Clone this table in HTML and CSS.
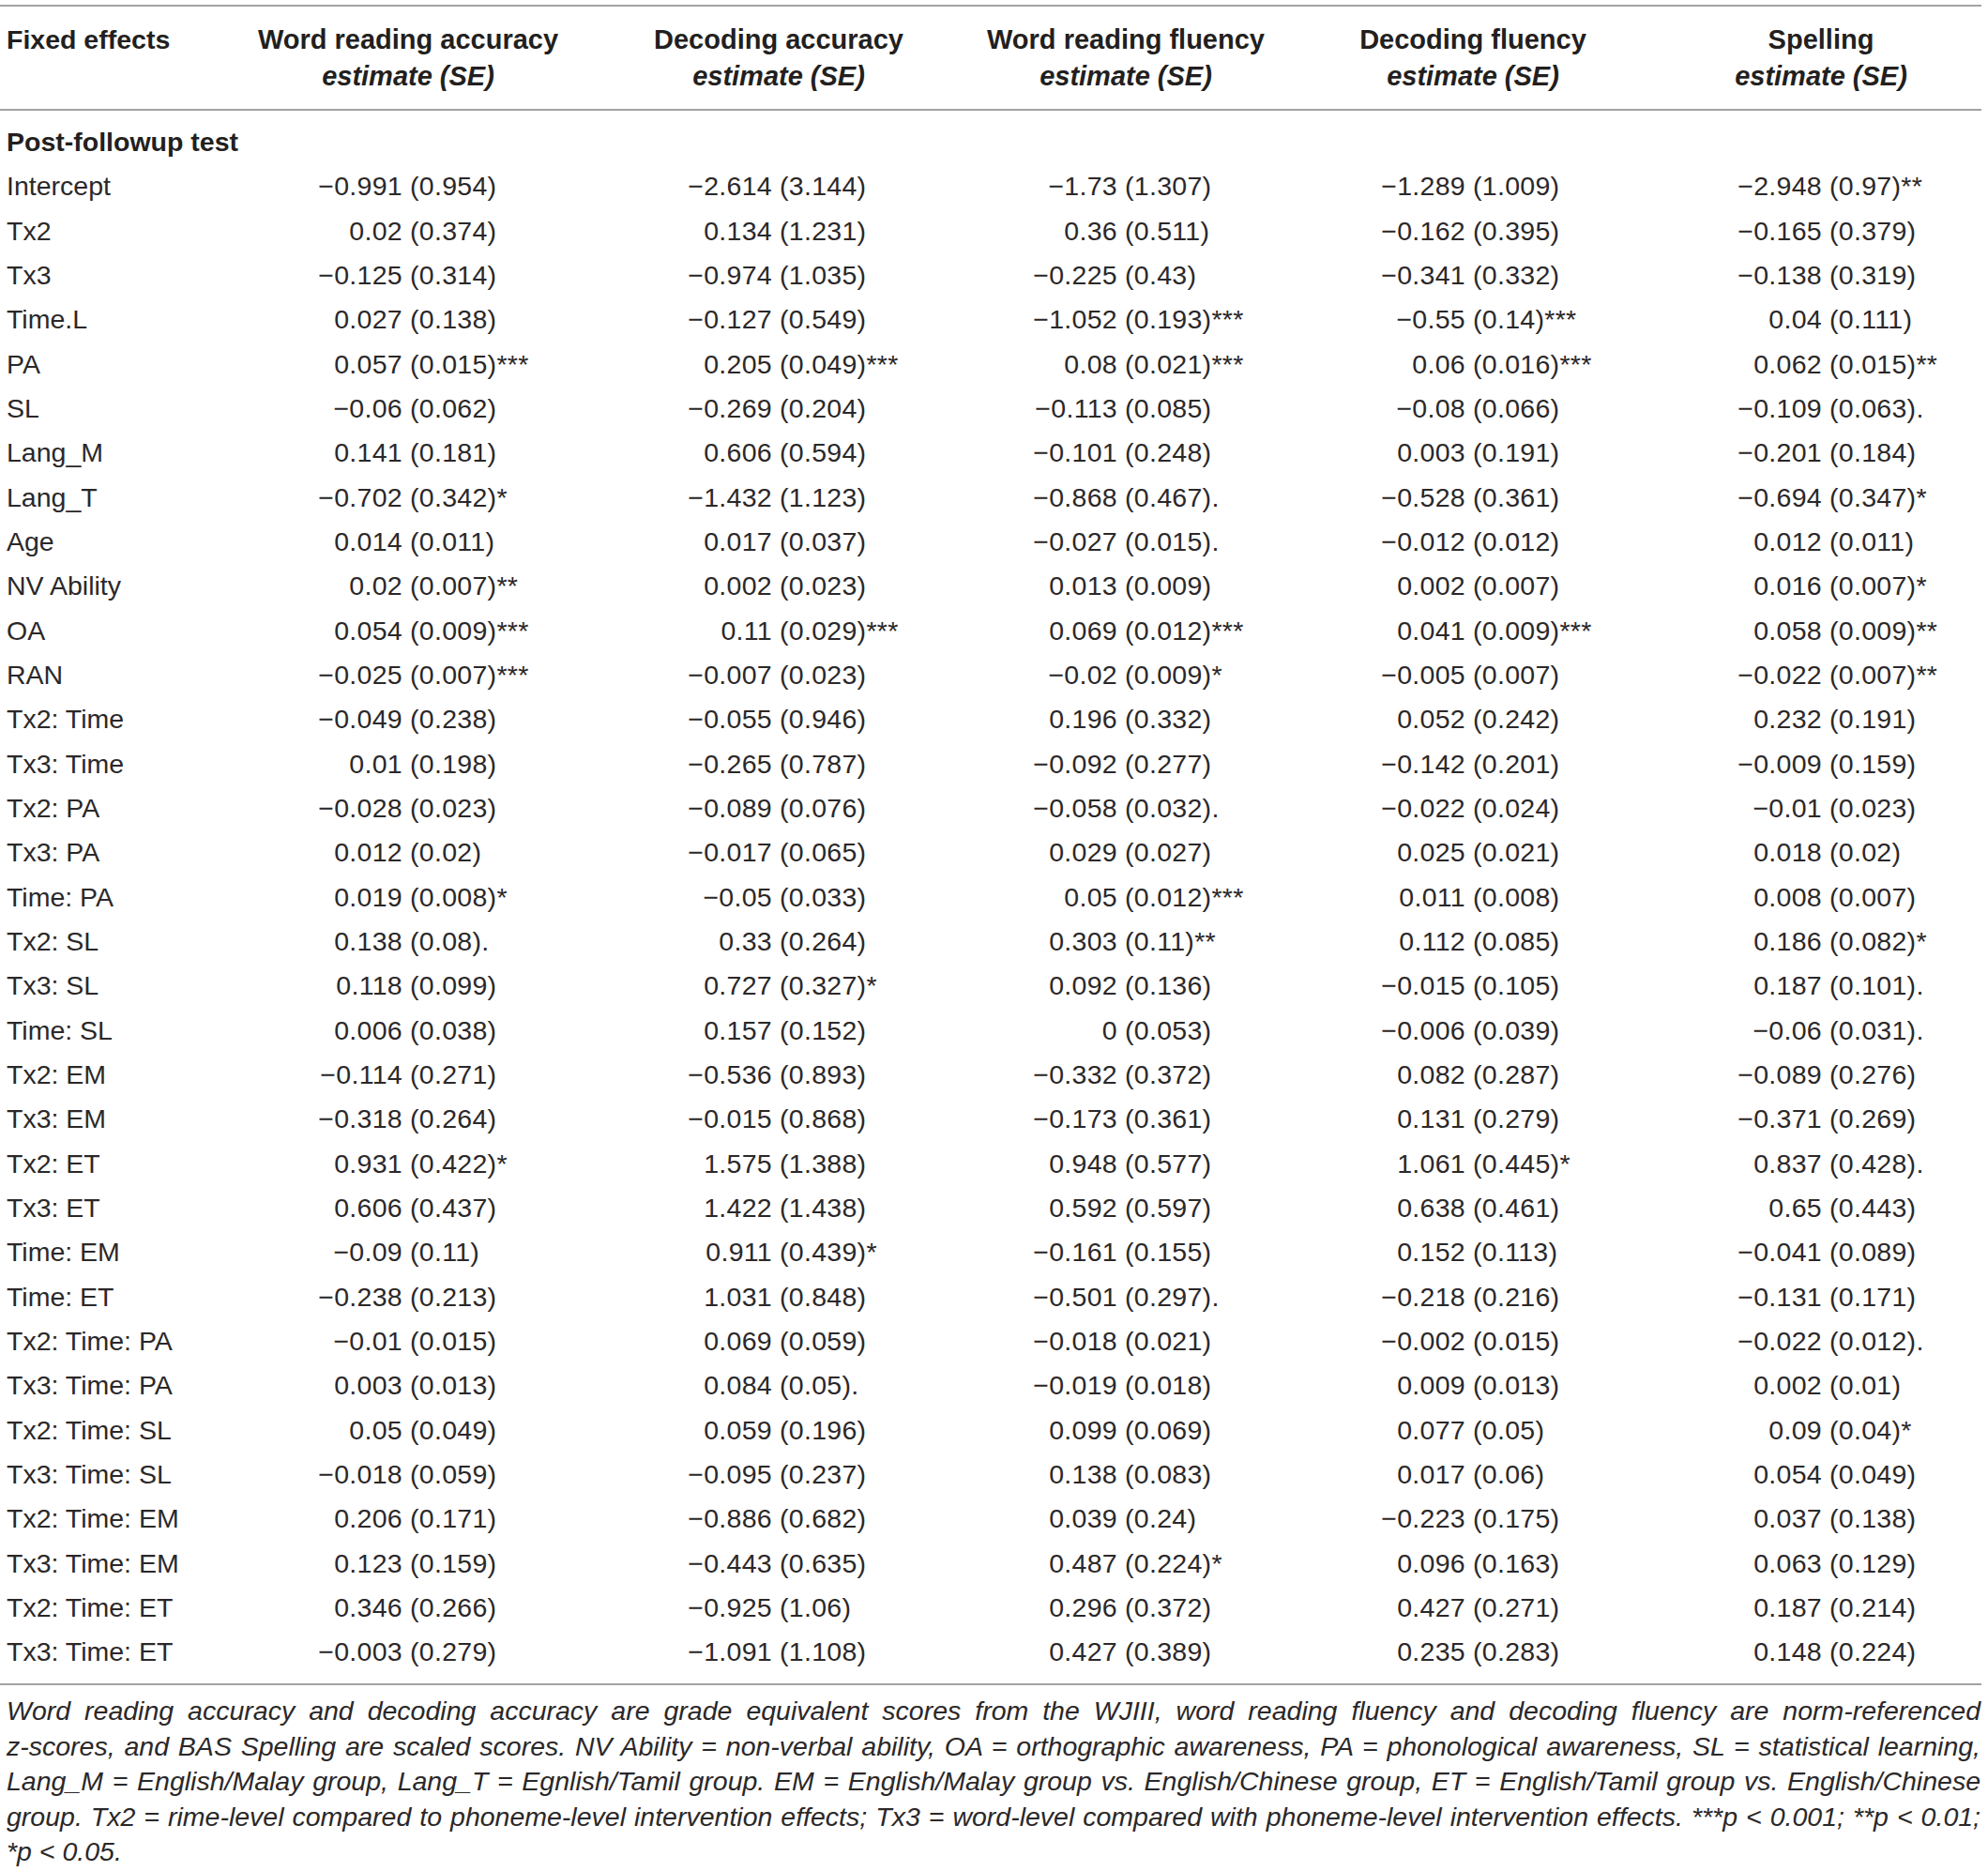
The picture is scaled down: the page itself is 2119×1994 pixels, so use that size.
FILE: index.html
```html
<!DOCTYPE html>
<html lang="en">
<head>
<meta charset="utf-8">
<title>Fixed effects</title>
<link rel="stylesheet" href="styles.css">
</head>
<body>
<div class="page">
  <div class="thead">
    <div class="th lab">Fixed effects</div>
    <div class="th">Word reading accuracy<em>estimate (SE)</em></div>
    <div class="th">Decoding accuracy<em>estimate (SE)</em></div>
    <div class="th">Word reading fluency<em>estimate (SE)</em></div>
    <div class="th">Decoding fluency<em>estimate (SE)</em></div>
    <div class="th">Spelling<em>estimate (SE)</em></div>
  </div>
  <div class="tbody">
    <div class="tr sec"><div class="lab">Post-followup test</div></div>
    <div class="tr"><div class="lab">Intercept</div><div class="v c1"><span class="e">−0.991</span><span class="s">(0.954)</span></div><div class="v c2"><span class="e">−2.614</span><span class="s">(3.144)</span></div><div class="v c3"><span class="e">−1.73</span><span class="s">(1.307)</span></div><div class="v c4"><span class="e">−1.289</span><span class="s">(1.009)</span></div><div class="v c5"><span class="e">−2.948</span><span class="s">(0.97)**</span></div></div>
    <div class="tr"><div class="lab">Tx2</div><div class="v c1"><span class="e">0.02</span><span class="s">(0.374)</span></div><div class="v c2"><span class="e">0.134</span><span class="s">(1.231)</span></div><div class="v c3"><span class="e">0.36</span><span class="s">(0.511)</span></div><div class="v c4"><span class="e">−0.162</span><span class="s">(0.395)</span></div><div class="v c5"><span class="e">−0.165</span><span class="s">(0.379)</span></div></div>
    <div class="tr"><div class="lab">Tx3</div><div class="v c1"><span class="e">−0.125</span><span class="s">(0.314)</span></div><div class="v c2"><span class="e">−0.974</span><span class="s">(1.035)</span></div><div class="v c3"><span class="e">−0.225</span><span class="s">(0.43)</span></div><div class="v c4"><span class="e">−0.341</span><span class="s">(0.332)</span></div><div class="v c5"><span class="e">−0.138</span><span class="s">(0.319)</span></div></div>
    <div class="tr"><div class="lab">Time.L</div><div class="v c1"><span class="e">0.027</span><span class="s">(0.138)</span></div><div class="v c2"><span class="e">−0.127</span><span class="s">(0.549)</span></div><div class="v c3"><span class="e">−1.052</span><span class="s">(0.193)***</span></div><div class="v c4"><span class="e">−0.55</span><span class="s">(0.14)***</span></div><div class="v c5"><span class="e">0.04</span><span class="s">(0.111)</span></div></div>
    <div class="tr"><div class="lab">PA</div><div class="v c1"><span class="e">0.057</span><span class="s">(0.015)***</span></div><div class="v c2"><span class="e">0.205</span><span class="s">(0.049)***</span></div><div class="v c3"><span class="e">0.08</span><span class="s">(0.021)***</span></div><div class="v c4"><span class="e">0.06</span><span class="s">(0.016)***</span></div><div class="v c5"><span class="e">0.062</span><span class="s">(0.015)**</span></div></div>
    <div class="tr"><div class="lab">SL</div><div class="v c1"><span class="e">−0.06</span><span class="s">(0.062)</span></div><div class="v c2"><span class="e">−0.269</span><span class="s">(0.204)</span></div><div class="v c3"><span class="e">−0.113</span><span class="s">(0.085)</span></div><div class="v c4"><span class="e">−0.08</span><span class="s">(0.066)</span></div><div class="v c5"><span class="e">−0.109</span><span class="s">(0.063).</span></div></div>
    <div class="tr"><div class="lab">Lang_M</div><div class="v c1"><span class="e">0.141</span><span class="s">(0.181)</span></div><div class="v c2"><span class="e">0.606</span><span class="s">(0.594)</span></div><div class="v c3"><span class="e">−0.101</span><span class="s">(0.248)</span></div><div class="v c4"><span class="e">0.003</span><span class="s">(0.191)</span></div><div class="v c5"><span class="e">−0.201</span><span class="s">(0.184)</span></div></div>
    <div class="tr"><div class="lab">Lang_T</div><div class="v c1"><span class="e">−0.702</span><span class="s">(0.342)*</span></div><div class="v c2"><span class="e">−1.432</span><span class="s">(1.123)</span></div><div class="v c3"><span class="e">−0.868</span><span class="s">(0.467).</span></div><div class="v c4"><span class="e">−0.528</span><span class="s">(0.361)</span></div><div class="v c5"><span class="e">−0.694</span><span class="s">(0.347)*</span></div></div>
    <div class="tr"><div class="lab">Age</div><div class="v c1"><span class="e">0.014</span><span class="s">(0.011)</span></div><div class="v c2"><span class="e">0.017</span><span class="s">(0.037)</span></div><div class="v c3"><span class="e">−0.027</span><span class="s">(0.015).</span></div><div class="v c4"><span class="e">−0.012</span><span class="s">(0.012)</span></div><div class="v c5"><span class="e">0.012</span><span class="s">(0.011)</span></div></div>
    <div class="tr"><div class="lab">NV Ability</div><div class="v c1"><span class="e">0.02</span><span class="s">(0.007)**</span></div><div class="v c2"><span class="e">0.002</span><span class="s">(0.023)</span></div><div class="v c3"><span class="e">0.013</span><span class="s">(0.009)</span></div><div class="v c4"><span class="e">0.002</span><span class="s">(0.007)</span></div><div class="v c5"><span class="e">0.016</span><span class="s">(0.007)*</span></div></div>
    <div class="tr"><div class="lab">OA</div><div class="v c1"><span class="e">0.054</span><span class="s">(0.009)***</span></div><div class="v c2"><span class="e">0.11</span><span class="s">(0.029)***</span></div><div class="v c3"><span class="e">0.069</span><span class="s">(0.012)***</span></div><div class="v c4"><span class="e">0.041</span><span class="s">(0.009)***</span></div><div class="v c5"><span class="e">0.058</span><span class="s">(0.009)**</span></div></div>
    <div class="tr"><div class="lab">RAN</div><div class="v c1"><span class="e">−0.025</span><span class="s">(0.007)***</span></div><div class="v c2"><span class="e">−0.007</span><span class="s">(0.023)</span></div><div class="v c3"><span class="e">−0.02</span><span class="s">(0.009)*</span></div><div class="v c4"><span class="e">−0.005</span><span class="s">(0.007)</span></div><div class="v c5"><span class="e">−0.022</span><span class="s">(0.007)**</span></div></div>
    <div class="tr"><div class="lab">Tx2: Time</div><div class="v c1"><span class="e">−0.049</span><span class="s">(0.238)</span></div><div class="v c2"><span class="e">−0.055</span><span class="s">(0.946)</span></div><div class="v c3"><span class="e">0.196</span><span class="s">(0.332)</span></div><div class="v c4"><span class="e">0.052</span><span class="s">(0.242)</span></div><div class="v c5"><span class="e">0.232</span><span class="s">(0.191)</span></div></div>
    <div class="tr"><div class="lab">Tx3: Time</div><div class="v c1"><span class="e">0.01</span><span class="s">(0.198)</span></div><div class="v c2"><span class="e">−0.265</span><span class="s">(0.787)</span></div><div class="v c3"><span class="e">−0.092</span><span class="s">(0.277)</span></div><div class="v c4"><span class="e">−0.142</span><span class="s">(0.201)</span></div><div class="v c5"><span class="e">−0.009</span><span class="s">(0.159)</span></div></div>
    <div class="tr"><div class="lab">Tx2: PA</div><div class="v c1"><span class="e">−0.028</span><span class="s">(0.023)</span></div><div class="v c2"><span class="e">−0.089</span><span class="s">(0.076)</span></div><div class="v c3"><span class="e">−0.058</span><span class="s">(0.032).</span></div><div class="v c4"><span class="e">−0.022</span><span class="s">(0.024)</span></div><div class="v c5"><span class="e">−0.01</span><span class="s">(0.023)</span></div></div>
    <div class="tr"><div class="lab">Tx3: PA</div><div class="v c1"><span class="e">0.012</span><span class="s">(0.02)</span></div><div class="v c2"><span class="e">−0.017</span><span class="s">(0.065)</span></div><div class="v c3"><span class="e">0.029</span><span class="s">(0.027)</span></div><div class="v c4"><span class="e">0.025</span><span class="s">(0.021)</span></div><div class="v c5"><span class="e">0.018</span><span class="s">(0.02)</span></div></div>
    <div class="tr"><div class="lab">Time: PA</div><div class="v c1"><span class="e">0.019</span><span class="s">(0.008)*</span></div><div class="v c2"><span class="e">−0.05</span><span class="s">(0.033)</span></div><div class="v c3"><span class="e">0.05</span><span class="s">(0.012)***</span></div><div class="v c4"><span class="e">0.011</span><span class="s">(0.008)</span></div><div class="v c5"><span class="e">0.008</span><span class="s">(0.007)</span></div></div>
    <div class="tr"><div class="lab">Tx2: SL</div><div class="v c1"><span class="e">0.138</span><span class="s">(0.08).</span></div><div class="v c2"><span class="e">0.33</span><span class="s">(0.264)</span></div><div class="v c3"><span class="e">0.303</span><span class="s">(0.11)**</span></div><div class="v c4"><span class="e">0.112</span><span class="s">(0.085)</span></div><div class="v c5"><span class="e">0.186</span><span class="s">(0.082)*</span></div></div>
    <div class="tr"><div class="lab">Tx3: SL</div><div class="v c1"><span class="e">0.118</span><span class="s">(0.099)</span></div><div class="v c2"><span class="e">0.727</span><span class="s">(0.327)*</span></div><div class="v c3"><span class="e">0.092</span><span class="s">(0.136)</span></div><div class="v c4"><span class="e">−0.015</span><span class="s">(0.105)</span></div><div class="v c5"><span class="e">0.187</span><span class="s">(0.101).</span></div></div>
    <div class="tr"><div class="lab">Time: SL</div><div class="v c1"><span class="e">0.006</span><span class="s">(0.038)</span></div><div class="v c2"><span class="e">0.157</span><span class="s">(0.152)</span></div><div class="v c3"><span class="e">0</span><span class="s">(0.053)</span></div><div class="v c4"><span class="e">−0.006</span><span class="s">(0.039)</span></div><div class="v c5"><span class="e">−0.06</span><span class="s">(0.031).</span></div></div>
    <div class="tr"><div class="lab">Tx2: EM</div><div class="v c1"><span class="e">−0.114</span><span class="s">(0.271)</span></div><div class="v c2"><span class="e">−0.536</span><span class="s">(0.893)</span></div><div class="v c3"><span class="e">−0.332</span><span class="s">(0.372)</span></div><div class="v c4"><span class="e">0.082</span><span class="s">(0.287)</span></div><div class="v c5"><span class="e">−0.089</span><span class="s">(0.276)</span></div></div>
    <div class="tr"><div class="lab">Tx3: EM</div><div class="v c1"><span class="e">−0.318</span><span class="s">(0.264)</span></div><div class="v c2"><span class="e">−0.015</span><span class="s">(0.868)</span></div><div class="v c3"><span class="e">−0.173</span><span class="s">(0.361)</span></div><div class="v c4"><span class="e">0.131</span><span class="s">(0.279)</span></div><div class="v c5"><span class="e">−0.371</span><span class="s">(0.269)</span></div></div>
    <div class="tr"><div class="lab">Tx2: ET</div><div class="v c1"><span class="e">0.931</span><span class="s">(0.422)*</span></div><div class="v c2"><span class="e">1.575</span><span class="s">(1.388)</span></div><div class="v c3"><span class="e">0.948</span><span class="s">(0.577)</span></div><div class="v c4"><span class="e">1.061</span><span class="s">(0.445)*</span></div><div class="v c5"><span class="e">0.837</span><span class="s">(0.428).</span></div></div>
    <div class="tr"><div class="lab">Tx3: ET</div><div class="v c1"><span class="e">0.606</span><span class="s">(0.437)</span></div><div class="v c2"><span class="e">1.422</span><span class="s">(1.438)</span></div><div class="v c3"><span class="e">0.592</span><span class="s">(0.597)</span></div><div class="v c4"><span class="e">0.638</span><span class="s">(0.461)</span></div><div class="v c5"><span class="e">0.65</span><span class="s">(0.443)</span></div></div>
    <div class="tr"><div class="lab">Time: EM</div><div class="v c1"><span class="e">−0.09</span><span class="s">(0.11)</span></div><div class="v c2"><span class="e">0.911</span><span class="s">(0.439)*</span></div><div class="v c3"><span class="e">−0.161</span><span class="s">(0.155)</span></div><div class="v c4"><span class="e">0.152</span><span class="s">(0.113)</span></div><div class="v c5"><span class="e">−0.041</span><span class="s">(0.089)</span></div></div>
    <div class="tr"><div class="lab">Time: ET</div><div class="v c1"><span class="e">−0.238</span><span class="s">(0.213)</span></div><div class="v c2"><span class="e">1.031</span><span class="s">(0.848)</span></div><div class="v c3"><span class="e">−0.501</span><span class="s">(0.297).</span></div><div class="v c4"><span class="e">−0.218</span><span class="s">(0.216)</span></div><div class="v c5"><span class="e">−0.131</span><span class="s">(0.171)</span></div></div>
    <div class="tr"><div class="lab">Tx2: Time: PA</div><div class="v c1"><span class="e">−0.01</span><span class="s">(0.015)</span></div><div class="v c2"><span class="e">0.069</span><span class="s">(0.059)</span></div><div class="v c3"><span class="e">−0.018</span><span class="s">(0.021)</span></div><div class="v c4"><span class="e">−0.002</span><span class="s">(0.015)</span></div><div class="v c5"><span class="e">−0.022</span><span class="s">(0.012).</span></div></div>
    <div class="tr"><div class="lab">Tx3: Time: PA</div><div class="v c1"><span class="e">0.003</span><span class="s">(0.013)</span></div><div class="v c2"><span class="e">0.084</span><span class="s">(0.05).</span></div><div class="v c3"><span class="e">−0.019</span><span class="s">(0.018)</span></div><div class="v c4"><span class="e">0.009</span><span class="s">(0.013)</span></div><div class="v c5"><span class="e">0.002</span><span class="s">(0.01)</span></div></div>
    <div class="tr"><div class="lab">Tx2: Time: SL</div><div class="v c1"><span class="e">0.05</span><span class="s">(0.049)</span></div><div class="v c2"><span class="e">0.059</span><span class="s">(0.196)</span></div><div class="v c3"><span class="e">0.099</span><span class="s">(0.069)</span></div><div class="v c4"><span class="e">0.077</span><span class="s">(0.05)</span></div><div class="v c5"><span class="e">0.09</span><span class="s">(0.04)*</span></div></div>
    <div class="tr"><div class="lab">Tx3: Time: SL</div><div class="v c1"><span class="e">−0.018</span><span class="s">(0.059)</span></div><div class="v c2"><span class="e">−0.095</span><span class="s">(0.237)</span></div><div class="v c3"><span class="e">0.138</span><span class="s">(0.083)</span></div><div class="v c4"><span class="e">0.017</span><span class="s">(0.06)</span></div><div class="v c5"><span class="e">0.054</span><span class="s">(0.049)</span></div></div>
    <div class="tr"><div class="lab">Tx2: Time: EM</div><div class="v c1"><span class="e">0.206</span><span class="s">(0.171)</span></div><div class="v c2"><span class="e">−0.886</span><span class="s">(0.682)</span></div><div class="v c3"><span class="e">0.039</span><span class="s">(0.24)</span></div><div class="v c4"><span class="e">−0.223</span><span class="s">(0.175)</span></div><div class="v c5"><span class="e">0.037</span><span class="s">(0.138)</span></div></div>
    <div class="tr"><div class="lab">Tx3: Time: EM</div><div class="v c1"><span class="e">0.123</span><span class="s">(0.159)</span></div><div class="v c2"><span class="e">−0.443</span><span class="s">(0.635)</span></div><div class="v c3"><span class="e">0.487</span><span class="s">(0.224)*</span></div><div class="v c4"><span class="e">0.096</span><span class="s">(0.163)</span></div><div class="v c5"><span class="e">0.063</span><span class="s">(0.129)</span></div></div>
    <div class="tr"><div class="lab">Tx2: Time: ET</div><div class="v c1"><span class="e">0.346</span><span class="s">(0.266)</span></div><div class="v c2"><span class="e">−0.925</span><span class="s">(1.06)</span></div><div class="v c3"><span class="e">0.296</span><span class="s">(0.372)</span></div><div class="v c4"><span class="e">0.427</span><span class="s">(0.271)</span></div><div class="v c5"><span class="e">0.187</span><span class="s">(0.214)</span></div></div>
    <div class="tr"><div class="lab">Tx3: Time: ET</div><div class="v c1"><span class="e">−0.003</span><span class="s">(0.279)</span></div><div class="v c2"><span class="e">−1.091</span><span class="s">(1.108)</span></div><div class="v c3"><span class="e">0.427</span><span class="s">(0.389)</span></div><div class="v c4"><span class="e">0.235</span><span class="s">(0.283)</span></div><div class="v c5"><span class="e">0.148</span><span class="s">(0.224)</span></div></div>
  </div>
  <p class="note">
    <span class="ln">Word reading accuracy and decoding accuracy are grade equivalent scores from the WJIII, word reading fluency and decoding fluency are norm-referenced</span>
    <span class="ln">z-scores, and BAS Spelling are scaled scores. NV Ability = non-verbal ability, OA = orthographic awareness, PA = phonological awareness, SL = statistical learning,</span>
    <span class="ln">Lang_M = English/Malay group, Lang_T = Egnlish/Tamil group. EM = English/Malay group vs. English/Chinese group, ET = English/Tamil group vs. English/Chinese</span>
    <span class="ln">group. Tx2 = rime-level compared to phoneme-level intervention effects; Tx3 = word-level compared with phoneme-level intervention effects. ***p &lt; 0.001; **p &lt; 0.01;</span>
    <span class="ln last">*p &lt; 0.05.</span>
  </p>
</div>
</body>
</html>
```
FILE: styles.css
```css
html, body {
  margin: 0;
  padding: 0;
  background: #ffffff;
}

body {
  font-family: "Liberation Sans", Arial, Helvetica, sans-serif;
  color: #2b2829;
}

.page {
  width: 2112px;
  padding-top: 5px;
}

.thead,
.tr {
  display: grid;
  grid-template-columns: 240px 390px 400px 340px 400px 342px;
}

.thead {
  border-top: 2px solid #a3a3a3;
  border-bottom: 2px solid #a3a3a3;
  padding: 16px 0;
}

.th {
  font-weight: bold;
  font-size: 29px;
  line-height: 38.5px;
  text-align: center;
  color: #231f20;
  white-space: nowrap;
}

.th em {
  display: block;
  font-style: italic;
}

.th.lab {
  text-align: left;
  padding-left: 7px;
  font-size: 28.5px;
}

.tbody {
  padding: 10px 0;
  border-bottom: 2px solid #a3a3a3;
}

.tr {
  height: 47.33px;
  font-size: 28.5px;
  line-height: 47.33px;
}

.lab {
  padding-left: 7px;
  white-space: nowrap;
}

.sec .lab {
  grid-column: 1 / -1;
  font-weight: bold;
  color: #231f20;
}

.v {
  display: grid;
  grid-template-columns: var(--split) 1fr;
  white-space: nowrap;
  letter-spacing: 0.3px;
}

.e {
  text-align: right;
  padding-right: 8px;
}

.s {
  text-align: left;
}

.c1 { --split: 197px; }
.c2 { --split: 201px; }
.c3 { --split: 169px; }
.c4 { --split: 200px; }
.c5 { --split: 180px; }

.note {
  margin: 0;
  padding: 9px 1px 0 7px;
  font-style: italic;
  font-size: 28.5px;
  line-height: 37.5px;
}

.ln {
  display: block;
  text-align: justify;
  text-align-last: justify;
}

.ln.last {
  text-align-last: left;
}
```
